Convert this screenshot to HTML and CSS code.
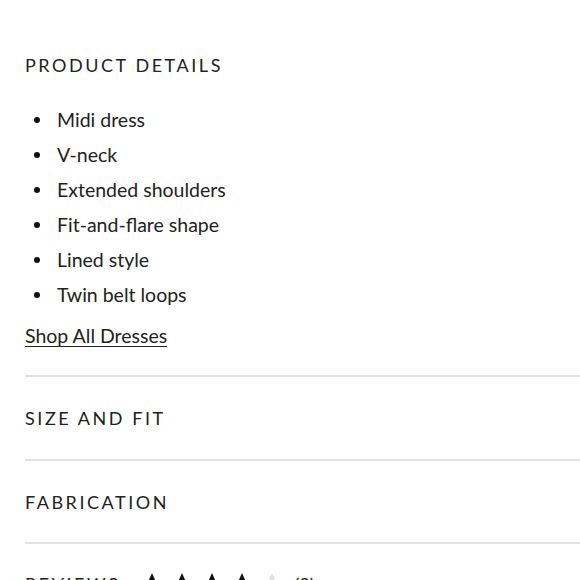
FILE: index.html
```html
<!DOCTYPE html>
<html>
<head>
<meta charset="utf-8">
<link rel="stylesheet" href="styles.css">
</head>
<body>
<div class="page">
  <section class="details">
    <h2 class="title">PRODUCT DETAILS</h2>
    <ul class="list">
      <li>Midi dress</li>
      <li>V-neck</li>
      <li>Extended shoulders</li>
      <li>Fit-and-flare shape</li>
      <li>Lined style</li>
      <li>Twin belt loops</li>
    </ul>
    <a class="shop" href="#">Shop All Dresses</a>
  </section>
  <section class="acc"><h2 class="title">SIZE AND FIT</h2></section>
  <section class="acc"><h2 class="title">FABRICATION</h2></section>
  <section class="acc reviews">
    <h2 class="title">REVIEWS</h2>
    <div class="stars">
      <svg class="star" viewBox="0 0 24 24"><path d="M12 1l3.2 7.2 7.8.7-5.9 5.2 1.8 7.7L12 17.8 5.1 21.8l1.8-7.7L1 8.9l7.8-.7z"/></svg>
      <svg class="star" viewBox="0 0 24 24"><path d="M12 1l3.2 7.2 7.8.7-5.9 5.2 1.8 7.7L12 17.8 5.1 21.8l1.8-7.7L1 8.9l7.8-.7z"/></svg>
      <svg class="star" viewBox="0 0 24 24"><path d="M12 1l3.2 7.2 7.8.7-5.9 5.2 1.8 7.7L12 17.8 5.1 21.8l1.8-7.7L1 8.9l7.8-.7z"/></svg>
      <svg class="star" viewBox="0 0 24 24"><path d="M12 1l3.2 7.2 7.8.7-5.9 5.2 1.8 7.7L12 17.8 5.1 21.8l1.8-7.7L1 8.9l7.8-.7z"/></svg>
      <svg class="star empty" viewBox="0 0 24 24"><path d="M12 1l3.2 7.2 7.8.7-5.9 5.2 1.8 7.7L12 17.8 5.1 21.8l1.8-7.7L1 8.9l7.8-.7z"/></svg>
    </div>
    <span class="count">(2)</span>
  </section>
</div>
</body>
</html>
```
FILE: styles.css
```css
html, body { margin: 0; padding: 0; background: #fff; }
body {
  font-family: "Lato", "Noto Sans", sans-serif;
  color: #222;
  overflow: hidden;
  height: 580px;
}
.page { padding-left: 25px; }
.title {
  margin: 0;
  font-weight: 400;
  font-size: 18px;
  letter-spacing: 2.55px;
  line-height: 22px;
  color: #222;
}
.details { padding-top: 54px; padding-bottom: 27px; border-bottom: 2px solid #e2e2e2; }
.list { list-style: none; margin: 26px 0 0 0; padding: 0; }
.list li {
  font-size: 19.5px;
  line-height: 35px;
  padding-left: 32px;
  position: relative;
}
.list li::before {
  content: "";
  position: absolute;
  left: 9px;
  top: 15px;
  width: 6px;
  height: 6px;
  border-radius: 50%;
  background: #111;
}
.shop {
  display: inline-block;
  margin-top: 12px;
  font-size: 19.5px;
  line-height: 24px;
  color: #222;
  text-decoration: underline;
  text-underline-offset: 3px;
  text-decoration-thickness: 1px;
}
.acc { padding: 30px 0 30px 0; border-bottom: 2px solid #e2e2e2; }
.acc + .acc { padding-bottom: 29px; }
.reviews { border-bottom: none; display: flex; align-items: center; padding-top: 28px; }
.stars { display: flex; gap: 6px; margin-left: 20px; }
.star { width: 24px; height: 24px; fill: #111; }
.star.empty { fill: #ddd; }
.count { margin-left: 10px; font-size: 18px; }
```
